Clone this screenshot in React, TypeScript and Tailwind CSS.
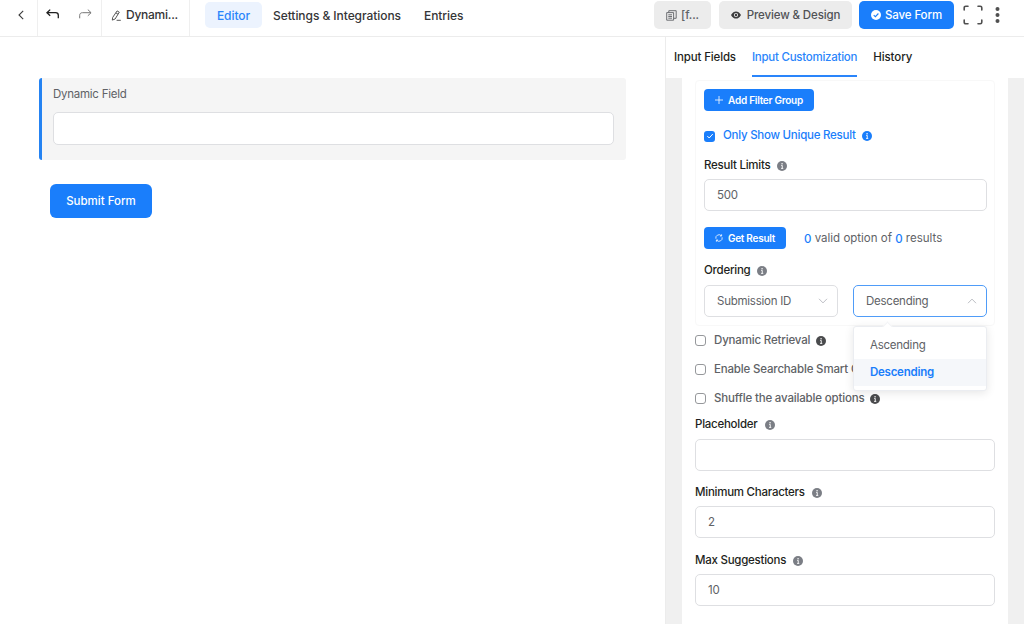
import type { ReactNode } from "react";
import clsx from "clsx";

function InfoIcon({ className }: { className?: string }) {
  return (
    <svg viewBox="0 0 12 12" className={clsx("size-[10px] shrink-0", className)}>
      <circle cx="6" cy="6" r="6" fill="currentColor" />
      <circle cx="6.1" cy="3.2" r="0.9" fill="#fff" />
      <path d="M5 5.3h1.3v3.4M4.9 8.9h2.6" fill="none" stroke="#fff" strokeWidth="1.1" />
    </svg>
  );
}

function Label({ children, className }: { children: ReactNode; className?: string }) {
  return (
    <div className={clsx("flex h-4 items-center gap-[7px] font-medium text-[#1e1f21]", className)}>
      <span className="pt-0.5">{children}</span>
      <InfoIcon className="mt-0.5 text-[#7b7e85]" />
    </div>
  );
}

function TextInput({ value = "", className }: { value?: string; className?: string }) {
  return (
    <div
      className={clsx(
        "flex h-8 items-center rounded-[5px] border border-[#dedfe2] bg-white px-3 pt-0.5 text-[#606266]",
        className
      )}
    >
      {value}
    </div>
  );
}

function CheckRow({ children }: { children: ReactNode }) {
  return (
    <div className="flex h-[29px] items-center whitespace-nowrap font-medium text-[#606266]">
      <span className="size-[11px] shrink-0 rounded-[3px] border border-[#96989b] bg-white" />
      <span className="mr-1.5 ml-2 tracking-[-0.17px]">{children}</span>
      <InfoIcon className="text-[#4a4b4d]" />
    </div>
  );
}

function Chevron({ up = false }: { up?: boolean }) {
  return (
    <svg viewBox="0 0 10 6" className={clsx("h-[6px] w-[10px]", up && "rotate-180")}>
      <path d="M1 0.8 5 4.9 9 0.8" fill="none" stroke="#b4b7bd" strokeWidth="0.9" />
    </svg>
  );
}

function Header() {
  return (
    <header className="flex h-[37px] shrink-0 border-b border-[#ececec] text-[12px] font-medium text-[#353537]">
      <div className="flex w-[38px] justify-center border-r border-[#efefef] pt-[10px] pl-1">
        <svg viewBox="0 0 6 10" className="h-[10px] w-[6px]">
          <path d="M5.2 0.8 1 5l4.2 4.2" fill="none" stroke="#3c3c3c" strokeWidth="1.1" />
        </svg>
      </div>
      <div className="flex w-[64px] gap-[20px] border-r border-[#efefef] pt-[9px] pl-2">
        <svg viewBox="0 0 13 10" className="h-[10px] w-[13px] shrink-0">
          <path d="M4.2 0.6 0.9 3.7l3.3 3.1M1 3.7h8.6c1.7 0 2.7 1 2.7 2.6v3" fill="none" stroke="#202020" strokeWidth="1.3" />
        </svg>
        <svg viewBox="0 0 13 10" className="h-[10px] w-[13px] shrink-0">
          <path d="M8.8 0.6 12.1 3.7 8.8 6.8M12 3.7H3.4C1.7 3.7 0.7 4.7 0.7 6.3v3" fill="none" stroke="#777" strokeWidth="1" />
        </svg>
      </div>
      <div className="flex h-[30px] w-[87px] items-center gap-[5px] pl-[9px]">
        <svg viewBox="0 0 10 11" className="h-[11px] w-[10px] shrink-0">
          <path d="M6.1 0.9 8.3 2.2 4.1 9 1.3 10.1 1.7 7.4ZM4.9 2.9 7 4.2M5.6 10.3H9.8" fill="none" stroke="#444" strokeWidth="0.9" strokeLinejoin="round" />
        </svg>
        <span className="tracking-[-0.25px]">Dynami...</span>
      </div>
      <div className="w-px bg-[#efefef]" />
      <nav className="flex h-[32px] items-center pl-[15px] tracking-[-0.06px]">
        <a className="mt-[-2px] flex h-[26px] w-[57px] items-center justify-center rounded-[5px] bg-[#ecf3fe] pt-0.5 text-[#2a85fb]">
          Editor
        </a>
        <a className="ml-[11px] w-[151px]">Settings &amp; Integrations</a>
        <a>Entries</a>
      </nav>
      <div className="ml-auto flex h-[30px] items-center pr-6 text-[11.5px] tracking-[-0.12px]">
        <button className="flex h-[28px] w-[57px] items-center justify-center gap-1 rounded-[5px] bg-[#ececec] text-[#606266]">
          <svg viewBox="0 0 11 11" className="size-[11px]" fill="none" stroke="#606266" strokeWidth="0.9">
            <path d="M0.700 2.600h6.900v7.600H0.700zM2.800 2.500V0.700h7.400v7.600H7.700M2.300 4.800h3.700M2.300 6.500h3.700M2.300 8.200h3.700" />
          </svg>
          <span className="pt-0.5">[f...</span>
        </button>
        <button className="ml-2 flex h-[28px] w-[133px] items-center justify-center gap-1.5 rounded-[5px] bg-[#ececec] text-[#505256]">
          <svg viewBox="0 0 10 8" className="h-2 w-2.5">
            <path d="M0 4C1.5 1.4 3.1 0.4 5 0.4S8.500 1.4 10 4C8.500 6.600 6.900 7.600 5 7.600S1.500 6.600 0 4Z" fill="#3c3c3e" />
            <circle cx="5" cy="4" r="2.1" fill="#ececec" />
            <circle cx="5" cy="4" r="1.2" fill="#3c3c3e" />
          </svg>
          <span className="pt-0.5">Preview &amp; Design</span>
        </button>
        <button className="ml-[7px] flex h-[28px] w-[95px] items-center justify-center gap-1 rounded-[5px] bg-[#1a7efb] text-white">
          <svg viewBox="0 0 10 10" className="size-[10px]">
            <circle cx="5" cy="5" r="5" fill="#fff" />
            <path d="M2.700 5.100 4.400 6.700 7.400 3.500" fill="none" stroke="#1a7efb" strokeWidth="1.100" />
          </svg>
          <span className="pt-0.5">Save Form</span>
        </button>
        <svg viewBox="0 0 20 20" className="ml-[9px] size-5" fill="none" stroke="#505050" strokeWidth="1.600" strokeLinecap="round" strokeLinejoin="round">
          <path d="M1.200 5V2.800q0-1.600 1.600-1.600h2.200M15 1.200h2.200q1.600 0 1.600 1.600v2.200M18.800 15v2.200q0 1.600-1.600 1.600h-2.200M5 18.800H2.800q-1.600 0-1.600-1.600v-2.200" />
        </svg>
        <svg viewBox="0 0 5 18" className="ml-[12px] h-[18px] w-[5px]" fill="#505050">
          <circle cx="2.500" cy="3" r="2" />
          <circle cx="2.500" cy="9" r="2" />
          <circle cx="2.500" cy="15" r="2" />
        </svg>
      </div>
    </header>
  );
}

function Canvas() {
  return (
    <main className="w-[665px] pt-[41px] pl-[39px]">
      <div className="h-[82px] w-[587px] rounded-[3px] border-l-[3px] border-[#2583f2] bg-[#f5f5f5] px-[11px] pt-2">
        <div className="h-[26px] leading-4 text-[#606266]">Dynamic Field</div>
        <TextInput className="mr-px h-[33px]" />
      </div>
      <button className="mt-6 ml-[11px] h-[34px] w-[102px] rounded-[6px] bg-[#1a7efb] pt-0.5 font-medium tracking-normal text-white">
        Submit Form
      </button>
    </main>
  );
}

function OrderSelect() {
  return (
    <div className="relative w-[134px]">
      <div className="flex h-8 items-center justify-between rounded-[5px] border border-[#4f9cf8] bg-white pr-[9px] pl-3 text-[#606266]">
        <span className="pt-0.5">Descending</span>
        <Chevron up />
      </div>
      <div className="absolute top-[41px] left-0 z-10 h-[65px] w-[134px] rounded-[3px] border border-[#ebedf1] bg-white pt-[5px] text-[#606266] shadow-[0_2px_10px_rgba(0,0,0,0.1)]">
        <div className="absolute top-[-4px] left-[30px] size-[7px] rotate-45 border-t border-l border-[#f3f4f6] bg-white" />
        <div className="flex h-[27px] items-center pl-4">Ascending</div>
        <div className="flex h-[27px] items-center bg-[#f5f7fa] pl-4 font-semibold text-[#1a7efb]">Descending</div>
      </div>
    </div>
  );
}

function Sidebar() {
  return (
    <aside className="flex w-[359px] flex-col border-l border-[#ececec]">
      <div className="flex h-[41px] shrink-0 gap-4 pl-2 font-medium text-[#1e1f21]">
        <a className="h-10 leading-[41px] tracking-[-0.15px]">Input Fields</a>
        <a className="h-10 border-b-2 border-[#2a85fb] leading-[41px] text-[#2a85fb]">Input Customization</a>
        <a className="h-10 leading-[41px] tracking-[-0.1px]">History</a>
      </div>
      <div className="flex-1 bg-[#f0f0f0] pr-4 pl-4">
        <div className="h-full bg-white px-[13px] pt-0.5">
          <section className="h-[246px] rounded-[4px] border border-[#f8f8f8] pt-2 pr-[7px] pl-2">
            <button className="flex h-[22px] w-[110px] items-center justify-center gap-[5px] rounded-[4px] bg-[#1a7efb] text-[10px] font-semibold text-white">
              <svg viewBox="0 0 8 8" className="size-2">
                <path d="M4 0v8M0 4h8" stroke="#fff" strokeWidth="0.8" />
              </svg>
              Add Filter Group
            </button>
            <div className="mt-4 flex h-[18px] items-center font-medium text-[#1a7efb]">
              <span className="flex size-[11px] items-center justify-center rounded-[3px] bg-[#1a7efb]">
                <svg viewBox="0 0 8 8" className="size-2">
                  <path d="M1.300 4 3.200 6 6.800 2" fill="none" stroke="#fff" strokeWidth="1" />
                </svg>
              </span>
              <span className="mr-1.5 ml-2">Only Show Unique Result</span>
              <InfoIcon />
            </div>
            <Label className="mt-[12px]">Result Limits</Label>
            <TextInput value="500" className="mt-1.5" />
            <div className="mt-4 flex h-[22px] items-center">
              <button className="flex h-[22px] w-[82px] items-center justify-center gap-[5px] rounded-[4px] bg-[#1a7efb] text-[10px] font-semibold text-white">
                <svg viewBox="0 0 8 8" className="size-2" fill="none" stroke="#fff" strokeWidth="0.8">
                  <path d="M0.900 4.700A3.200 3.200 0 0 1 6.300 1.700M7.100 3.300A3.200 3.200 0 0 1 1.700 6.300M6.600 0.300V2H4.900M1.400 7.700V6h1.700" />
                </svg>
                Get Result
              </button>
              <div className="ml-[18px] pt-0.5 tracking-normal text-[#606266]">
                <span className="relative top-px font-medium text-[#1a7efb]">0</span> valid option of{" "}
                <span className="relative top-px font-medium text-[#1a7efb]">0</span> results
              </div>
            </div>
            <Label className="mt-[13px]">Ordering</Label>
            <div className="mt-[7px] flex justify-between">
              <div className="flex h-8 w-[134px] items-center justify-between rounded-[5px] border border-[#dedfe2] bg-white pr-[9px] pl-3 text-[#606266]">
                <span className="pt-0.5">Submission ID</span>
                <Chevron />
              </div>
              <OrderSelect />
            </div>
          </section>
          <CheckRow>Dynamic Retrieval</CheckRow>
          <CheckRow>Enable Searchable Smart Options</CheckRow>
          <CheckRow>Shuffle the available options</CheckRow>
          <Label className="mt-[3px]">Placeholder</Label>
          <TextInput className="mt-[7px]" />
          <Label className="mt-[13px]">Minimum Characters</Label>
          <TextInput value="2" className="mt-[6px]" />
          <Label className="mt-[14px]">Max Suggestions</Label>
          <TextInput value="10" className="mt-[6px]" />
        </div>
      </div>
    </aside>
  );
}

export default function App() {
  return (
    <div className="flex h-[624px] w-[1024px] flex-col overflow-hidden bg-white font-['Inter',sans-serif] text-[11.5px] tracking-[-0.25px]">
      <Header />
      <div className="flex flex-1">
        <Canvas />
        <Sidebar />
      </div>
    </div>
  );
}
